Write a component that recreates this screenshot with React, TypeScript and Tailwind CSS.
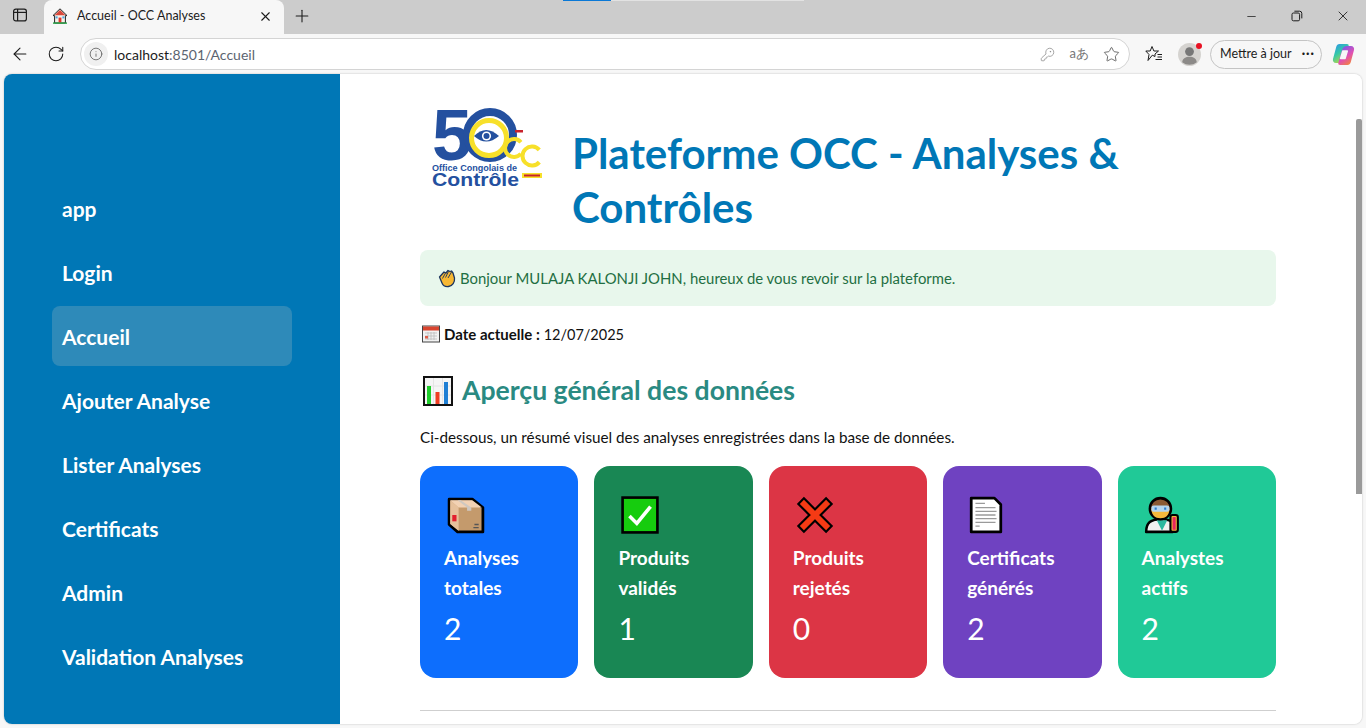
import { ArrowLeft, RotateCw, Info, X, Plus, Minus, KeyRound, Star } from 'lucide-react'

const pageFont = "font-['Lato','Noto_Sans',sans-serif]"
const navItems = ['app', 'Login', 'Accueil', 'Ajouter Analyse', 'Lister Analyses', 'Certificats', 'Admin', 'Validation Analyses']

function HouseIcon() {
  return (
    <svg width="16" height="16" viewBox="0 0 16 16">
      <path d="M8 .8 15 7.600 13.400 7.600V15H2.600V7.600H1Z" fill="#f4f1ea" stroke="#222" strokeWidth="1" />
      <path d="M8 2 13.500 7.200H2.500Z" fill="#d9483b" />
      <rect x="6.600" y="9.600" width="2.800" height="5" fill="#e5352b" />
      <rect x="3.600" y="8.400" width="2" height="2" fill="#4aa3e0" />
      <rect x="10.400" y="8.400" width="2" height="2" fill="#4aa3e0" />
      <rect x="1" y="14.400" width="14" height="1.400" fill="#25a244" />
    </svg>
  )
}

function SidebarToggleIcon() {
  return (
    <svg width="16" height="16" viewBox="0 0 16 16" fill="none" stroke="#1c1c1c" strokeWidth="1.200">
      <rect x="1.600" y="2.100" width="12.800" height="11.800" rx="2.200" />
      <path d="M5.600 2.100v11.800" />
      <path d="M2 5.400h12" strokeWidth="1.200" />
    </svg>
  )
}

function RestoreIcon() {
  return (
    <svg width="12" height="12" viewBox="0 0 12 12" fill="none" stroke="#1c1c1c" strokeWidth="1">
      <rect x="1" y="3" width="7.600" height="7.800" rx="1.400" />
      <path d="M3.400 1.200h5.200a2.200 2.200 0 0 1 2.200 2.200v5" />
    </svg>
  )
}

function FavoritesIcon() {
  return (
    <svg width="18" height="18" viewBox="0 0 18 18" fill="none" stroke="#1c1c1c" strokeWidth="1">
      <path d="M7 1.500 8.900 6H13.500L10 9V11.500L7.300 10.200 3 15.500 4 9.500 .8 6H5.200Z" strokeLinejoin="round" />
      <path d="M12.500 9.500h4.500M12.500 12h4.500M10.500 14.500h6.500" />
    </svg>
  )
}

function ProfileIcon() {
  return (
    <div className="relative h-[23px] w-[23px]">
      <svg width="23" height="23" viewBox="0 0 23 23">
        <circle cx="11.500" cy="11.500" r="11.500" fill="#d5d3d0" />
        <circle cx="11.500" cy="8.600" r="4.400" fill="#777" />
        <path d="M4.200 19.200c.6-4 3.600-5.400 7.300-5.400s6.700 1.400 7.300 5.400a11.500 11.500 0 0 1-14.600 0Z" fill="#8c8a88" />
      </svg>
      <span className="absolute right-[-1px] top-0 h-[6px] w-[6px] rounded-full bg-[#e81123]" />
    </div>
  )
}

function CopilotIcon() {
  return (
    <svg width="23" height="23" viewBox="0 0 23 23">
      <defs>
        <linearGradient id="cpA" x1="0" y1="0" x2="0.600" y2="1">
          <stop offset="0" stopColor="#2c8ff0" />
          <stop offset="0.500" stopColor="#35c8a8" />
          <stop offset="1" stopColor="#c8d83c" />
        </linearGradient>
        <linearGradient id="cpB" x1="0.200" y1="0" x2="0.800" y2="1">
          <stop offset="0" stopColor="#6a5cf0" />
          <stop offset="0.550" stopColor="#e04fb4" />
          <stop offset="1" stopColor="#f58a30" />
        </linearGradient>
      </defs>
      <path d="M7.500 1h7.500c1.200 0 2 .8 1.600 2L12.800 16.500C12.200 18.700 10.600 20 8.500 20H4C1.800 20 .4 18.200 1 16L4.200 4C4.700 2.200 5.800 1 7.500 1Z" fill="url(#cpA)" />
      <path d="M14.800 3H19c2.200 0 3.600 1.800 3 4l-3.200 12c-.5 1.800-1.700 3-3.300 3H8c-1.200 0-2-.8-1.700-2L10.200 6.500C10.800 4.300 12.700 3 14.800 3Z" fill="url(#cpB)" />
      <path d="M10.800 8h4.500l-2.200 7.400H8.600Z" fill="#f7f7f7" strokeLinejoin="round" stroke="#f7f7f7" strokeWidth="1.500" />
    </svg>
  )
}

function BrowserChrome() {
  return (
    <div className="shrink-0 font-['Lato','Noto_Sans',sans-serif]">
      <div className="flex h-[34px] items-end bg-[#cccccc]">
        <div className="flex h-[30px] w-[44px] items-center self-start pl-[12px]">
          <SidebarToggleIcon />
        </div>
        <div className="flex h-[34px] w-[240px] items-center rounded-t-[8px] bg-[#f7f7f7] pb-[2px] pl-[8px] pr-[11px]">
          <HouseIcon />
          <span className="ml-[9px] flex-1 text-[12.500px] text-[#1c1c1c]">Accueil - OCC Analyses</span>
          <X size={15} strokeWidth={1.800} className="text-[#1c1c1c]" />
        </div>
        <div className="flex h-[31px] w-[35px] items-center justify-center self-start">
          <Plus size={20} strokeWidth={1.300} className="text-[#1c1c1c]" />
        </div>
        <div className="flex-1 self-start pl-[244px]">
          <div className="flex h-[1px]">
            <div className="w-[48px] bg-[#0a78d6]" />
            <div className="w-[193px] bg-[#e2e2e2]" />
          </div>
        </div>
        <div className="flex h-[32px] items-center self-start">
          <div className="flex w-[46px] justify-center"><Minus size={13} strokeWidth={1.400} className="text-[#1c1c1c]" /></div>
          <div className="flex w-[46px] justify-center"><RestoreIcon /></div>
          <div className="flex w-[46px] justify-center"><X size={16} strokeWidth={1.300} className="text-[#1c1c1c]" /></div>
        </div>
      </div>
      <div className="flex h-[40px] items-center bg-[#f7f7f7] px-[10px]">
        <ArrowLeft size={20} strokeWidth={1.300} className="text-[#1c1c1c]" />
        <RotateCw size={18} strokeWidth={1.400} className="ml-[17px] text-[#1c1c1c]" />
        <div className="ml-[15px] flex h-[32px] w-[1050px] items-center rounded-full border border-[#d4d4d4] bg-white pl-[3px] pr-[9px]">
          <div className="flex h-[24px] w-[24px] items-center justify-center rounded-full bg-[#f0f0f0]">
            <Info size={14} strokeWidth={1.400} className="text-[#5f5f5f]" />
          </div>
          <span className="ml-[6px] flex-1 text-[14px] text-[#1c1c1c]">localhost<span className="text-[#5c6470]">:8501/Accueil</span></span>
          <KeyRound size={15} strokeWidth={1.200} className="text-[#8a8a8a]" />
          <span className="ml-[15px] text-[13px] text-[#777]">aあ</span>
          <Star size={17} strokeWidth={1.200} className="ml-[14px] text-[#555]" />
        </div>
        <div className="ml-[15px]"><FavoritesIcon /></div>
        <div className="ml-[15px]"><ProfileIcon /></div>
        <div className="ml-[9px] flex h-[29px] w-[112px] items-center rounded-full border border-[#c4c4c4] pl-[9px] text-[12.500px] text-[#1c1c1c]">
          Mettre à jour
          <span className="ml-[10px] font-bold tracking-[1px]">···</span>
        </div>
        <div className="ml-[10px]"><CopilotIcon /></div>
      </div>
    </div>
  )
}

function Sidebar() {
  return (
    <aside className="flex w-[336px] shrink-0 flex-col gap-[4px] bg-[#0077b6] px-[48px] pt-[104px]">
      {navItems.map(item => (
        <div
          key={item}
          className={`flex h-[60px] items-center rounded-[8px] px-[10px] pt-[2px] text-[21px] font-bold text-white ${item === 'Accueil' ? 'bg-[#2e8ab9]' : ''}`}
        >
          {item}
        </div>
      ))}
    </aside>
  )
}

function OccLogo() {
  return (
    <svg width="112" height="84" viewBox="0 0 112 84" className="ml-[12px] mt-[5px] shrink-0">
      <text x="0" y="53" fontFamily="Liberation Sans" fontWeight="700" fontSize="72" fill="#24509f">5</text>
      <circle cx="58" cy="28" r="23" fill="none" stroke="#24509f" strokeWidth="8" />
      <circle cx="57" cy="31" r="17.500" fill="#fff" stroke="#f7e02a" strokeWidth="5" />
      <path d="M42 29q12-12 25 0q-13 11-25 0Z" fill="#24509f" />
      <circle cx="54.500" cy="29" r="4.600" fill="#fff" />
      <circle cx="54.500" cy="29" r="3" fill="#24509f" />
      <path d="M88.900 35.200A9 9 0 1 0 88.900 46.800" fill="none" stroke="#f7e02a" strokeWidth="4" />
      <path d="M107.300 42.900A9.500 9.500 0 1 0 107.300 55.100" fill="none" stroke="#f7e02a" strokeWidth="4" />
      <rect x="83" y="23" width="8" height="2.500" fill="#c8222c" />
      <rect x="90" y="66" width="20" height="5" fill="#f7e02a" />
      <rect x="92" y="67.500" width="16" height="2" fill="#c8222c" />
      <text x="0" y="64" fontFamily="Liberation Sans" fontWeight="700" fontSize="9" fill="#24509f" textLength="85" lengthAdjust="spacingAndGlyphs">Office Congolais de</text>
      <text x="0" y="79" fontFamily="Liberation Sans" fontWeight="700" fontSize="18" fill="#24509f" textLength="87" lengthAdjust="spacingAndGlyphs">Contrôle</text>
    </svg>
  )
}

function PackageEmoji() {
  return (
    <svg width="38" height="38" viewBox="0 0 36 36">
      <path d="M2 3h22l10 8v23H10l-8-7Z" fill="#c49a6c" stroke="#000" strokeWidth="2.600" strokeLinejoin="round" />
      <path d="M3 4 11 11v22l-8-6.500Z" fill="#e6c19c" />
      <path d="M3 4h21l9 7H11Z" fill="#f2d2b4" />
      <path d="M13 4l10 7v3h-4v-3L10 4Z" fill="#cfc8c0" />
      <rect x="5" y="18" width="4" height="6" fill="#e3202e" />
      <path d="M26 27h4M25 30h5" stroke="#555" strokeWidth="1.200" />
    </svg>
  )
}

function CheckEmoji() {
  return (
    <svg width="38" height="38" viewBox="0 0 36 36">
      <rect x="1.500" y="1.500" width="33" height="33" fill="#16cc0e" stroke="#000" strokeWidth="2.500" />
      <path d="M8 19l7 7L28 10" fill="none" stroke="#fff" strokeWidth="3.400" />
    </svg>
  )
}

function CrossEmoji() {
  return (
    <svg width="38" height="38" viewBox="0 0 36 36">
      <path d="M7.500 7.500 28.500 28.500M28.500 7.500 7.500 28.500" stroke="#000" strokeWidth="9.500" strokeLinecap="square" />
      <path d="M7.500 7.500 28.500 28.500M28.500 7.500 7.500 28.500" stroke="#f53a14" strokeWidth="5.500" strokeLinecap="square" />
    </svg>
  )
}

function DocEmoji() {
  return (
    <svg width="38" height="38" viewBox="0 0 36 36" className="ml-[-3px]">
      <path d="M4 2h22l6 6v26H4Z" fill="#fff" stroke="#000" strokeWidth="2.600" strokeLinejoin="round" />
      <path d="M8 7h9M8 11h19M8 14.500h20M8 18h19M8 21.500h20M8 25h19M8 28.500h4" stroke="#9a9a9a" strokeWidth="1.200" />
    </svg>
  )
}

function ScientistEmoji() {
  return (
    <svg width="38" height="38" viewBox="0 0 36 36" className="ml-[-2px]">
      <path d="M3 34c0-9 4-12 15-12 5 0 8 1 10 3v9Z" fill="#f1f1f1" stroke="#000" strokeWidth="2.400" strokeLinejoin="round" />
      <path d="M13 23l5 10 5-10Z" fill="#2bb8a0" />
      <circle cx="16.500" cy="12" r="10" fill="#8b5a33" stroke="#000" strokeWidth="2.400" />
      <path d="M8 12h17c0 6-3.500 9-8.500 9S8 18 8 12Z" fill="#f5b93c" />
      <rect x="8" y="9" width="17" height="6" rx="2" fill="#b5d5ee" />
      <path d="M11 12h2M20 12h2" stroke="#2f7fd0" strokeWidth="2" />
      <rect x="26" y="18" width="7" height="16" rx="2" fill="#f5b93c" stroke="#000" strokeWidth="2" />
      <rect x="28" y="20" width="3" height="12" fill="#e8265e" />
    </svg>
  )
}

const stats = [
  { label: ['Analyses', 'totales'], value: '2', bg: 'bg-[#0d6efd]', icon: <PackageEmoji /> },
  { label: ['Produits', 'validés'], value: '1', bg: 'bg-[#198754]', icon: <CheckEmoji /> },
  { label: ['Produits', 'rejetés'], value: '0', bg: 'bg-[#dc3545]', icon: <CrossEmoji /> },
  { label: ['Certificats', 'générés'], value: '2', bg: 'bg-[#6f42c1]', icon: <DocEmoji /> },
  { label: ['Analystes', 'actifs'], value: '2', bg: 'bg-[#20c997]', icon: <ScientistEmoji /> },
]

function CalendarEmoji() {
  return (
    <svg width="18" height="18" viewBox="0 0 18 18" className="ml-[2px]">
      <rect x=".5" y="1" width="17" height="16" fill="#f2f2f2" stroke="#444" />
      <rect x="1" y="1.500" width="16" height="4" fill="#d9452f" />
      <path d="M3 8h12M3 11h12M3 14h12M6 7v8M9 7v8M12 7v8" stroke="#bbb" strokeWidth=".8" />
      <rect x="3" y="11" width="3" height="2.500" fill="#e0604c" />
    </svg>
  )
}

function ChartEmoji() {
  return (
    <svg width="30" height="30" viewBox="0 0 30 30" className="ml-[3px]">
      <rect x="1" y="1" width="28" height="28" fill="#f5f5f5" stroke="#111" strokeWidth="2" />
      <path d="M10.500 2v26M19.500 2v26M2 10h26M2 19h26" stroke="#e4e4e4" />
      <rect x="4" y="10" width="4" height="18" fill="#1fce2c" />
      <rect x="12.500" y="16" width="4" height="12" fill="#ef3d22" />
      <rect x="21" y="6" width="4" height="22" fill="#1f7fd4" />
    </svg>
  )
}

function WaveEmoji() {
  return (
    <svg width="19" height="19" viewBox="0 0 19 19">
      <path d="M2.500 8 7 3l2 1 2-2.500 2 1 1.500-.5 1.500 2 1.500 5c.5 4-2 8-6 8.500-3 .4-5.500-1-6.500-3.500Z" fill="#f7b733" stroke="#1c3560" strokeWidth="1.300" strokeLinejoin="round" />
      <path d="M8.500 4 5.500 9.500M11.500 2.500 8.500 8.500M14.500 3 11 9" fill="none" stroke="#1c3560" strokeWidth=".9" />
    </svg>
  )
}

function StatCard({ stat }: { stat: (typeof stats)[number] }) {
  return (
    <div className={`flex h-[212px] flex-col rounded-[16px] pl-[24px] pt-[30px] text-white ${stat.bg}`}>
      <div className="ml-[3px]">{stat.icon}</div>
      <div className="mt-[9px] text-[19px] font-bold leading-[30px]">
        {stat.label[0]}
        <br />
        {stat.label[1]}
      </div>
      <div className="mt-[7px] text-[30px] leading-[36px]">{stat.value}</div>
    </div>
  )
}

function MainContent() {
  return (
    <main className="relative min-w-0 flex-1 overflow-hidden bg-white pl-[80px] pr-[86px] pt-[28px] text-[#111]">
      <div className="flex items-start">
        <OccLogo />
        <h1 className="ml-[28px] mt-[24px] max-w-[600px] text-[42px] font-bold leading-[54px] text-[#0077b6]">
          Plateforme OCC - Analyses &amp; Contrôles
        </h1>
      </div>
      <div className="mt-[16px] flex h-[56px] items-center gap-[4px] rounded-[8px] bg-[#e8f7ec] pl-[17px] text-[14.900px] text-[#1f6f43]">
        <WaveEmoji />
        Bonjour MULAJA KALONJI JOHN, heureux de vous revoir sur la plateforme.
      </div>
      <div className="mt-[18px] flex h-[20px] items-center gap-[4px] text-[15px]">
        <CalendarEmoji />
        <span><b>Date actuelle :</b> <span className="text-[14.500px]">12/07/2025</span></span>
      </div>
      <div className="mt-[27px] flex h-[40px] items-center gap-[9px] text-[26.600px] font-bold text-[#2a8a82]">
        <ChartEmoji />
        Aperçu général des données
      </div>
      <p className="mt-[16px] text-[15.250px] leading-[20px]">
        Ci-dessous, un résumé visuel des analyses enregistrées dans la base de données.
      </p>
      <div className="mt-[19px] grid grid-cols-5 gap-[16px]">
        {stats.map(stat => (
          <StatCard key={stat.value + stat.label[0]} stat={stat} />
        ))}
      </div>
      <hr className="mt-[32px] border-[#cfcfcf]" />
      <div className="absolute right-0 top-[45px] h-[375px] w-[6px] rounded-t-[2px] bg-[#9a9a9a]" />
    </main>
  )
}

export default function App() {
  return (
    <div className={`flex h-[728px] w-[1366px] flex-col overflow-hidden bg-[#f7f7f7] ${pageFont}`}>
      <BrowserChrome />
      <div className="flex min-h-0 flex-1 px-[4px] pb-[4px]">
        <div className="flex flex-1 overflow-hidden rounded-[8px] shadow-[0_0_2px_rgba(0,0,0,0.25)]">
          <Sidebar />
          <MainContent />
        </div>
      </div>
    </div>
  )
}
